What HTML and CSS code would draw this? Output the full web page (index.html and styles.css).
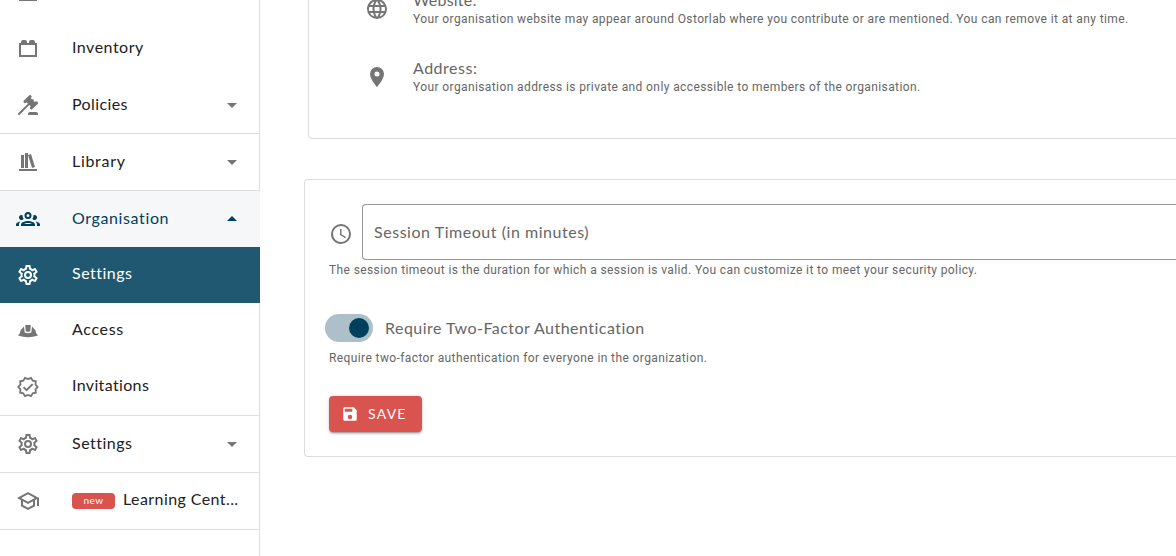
FILE: index.html
```
<!DOCTYPE html>
<html lang="en">
<head>
<meta charset="utf-8">
<title>Organisation settings</title>
<link rel="stylesheet" href="styles.css">
</head>
<body>
<svg class="defs" width="0" height="0">
  <symbol id="cog" viewBox="0 0 24 24"><path d="M12,8A4,4 0 0,1 16,12A4,4 0 0,1 12,16A4,4 0 0,1 8,12A4,4 0 0,1 12,8M12,10A2,2 0 0,0 10,12A2,2 0 0,0 12,14A2,2 0 0,0 14,12A2,2 0 0,0 12,10M10,22C9.75,22 9.54,21.82 9.5,21.58L9.13,18.93C8.5,18.68 7.96,18.34 7.44,17.94L4.95,18.95C4.73,19.03 4.46,18.95 4.34,18.73L2.34,15.27C2.21,15.05 2.27,14.78 2.46,14.63L4.57,12.97L4.5,12L4.57,11L2.46,9.37C2.27,9.22 2.21,8.95 2.34,8.73L4.34,5.27C4.46,5.05 4.73,4.96 4.95,5.05L7.44,6.05C7.96,5.66 8.5,5.32 9.13,5.07L9.5,2.42C9.54,2.18 9.75,2 10,2H14C14.25,2 14.46,2.18 14.5,2.42L14.87,5.07C15.5,5.32 16.04,5.66 16.56,6.05L19.05,5.05C19.27,4.96 19.54,5.05 19.66,5.27L21.66,8.73C21.79,8.95 21.73,9.22 21.54,9.37L19.43,11L19.5,12L19.43,13L21.54,14.63C21.73,14.78 21.79,15.05 21.66,15.27L19.66,18.73C19.54,18.95 19.27,19.04 19.05,18.95L16.56,17.95C16.04,18.34 15.5,18.68 14.87,18.93L14.5,21.58C14.46,21.82 14.25,22 14,22H10M11.25,4L10.88,6.61C9.68,6.86 8.62,7.5 7.85,8.39L5.44,7.35L4.69,8.65L6.8,10.2C6.4,11.37 6.4,12.64 6.8,13.8L4.68,15.36L5.43,16.66L7.86,15.62C8.63,16.5 9.68,17.14 10.87,17.38L11.24,20H12.76L13.13,17.39C14.32,17.14 15.37,16.5 16.14,15.62L18.57,16.66L19.32,15.36L17.2,13.81C17.6,12.64 17.6,11.37 17.2,10.2L19.31,8.65L18.56,7.35L16.15,8.39C15.38,7.5 14.32,6.86 13.12,6.62L12.75,4H11.25Z"/></symbol>
  <symbol id="caret" viewBox="0 0 24 24"><path d="M7,10L12,15L17,10H7Z"/></symbol>
</svg>
<div class="app">
  <nav class="sidebar">
    <div class="item"><svg class="icon" viewBox="0 0 24 24"><path d="M3 5H21V20H3Z"/></svg></div>
    <div class="item"><svg class="icon" viewBox="0 0 24 24"><path d="M19 6V5A2 2 0 0 0 17 3H15A2 2 0 0 0 13 5V6H11V5A2 2 0 0 0 9 3H7A2 2 0 0 0 5 5V6H3V20H21V6M19 18H5V8H19Z"/></svg><span class="label inventory">Inventory</span></div>
    <div class="item group ruled"><svg class="icon" viewBox="0 0 24 24"><path d="M2.3,20.28L11.9,10.68L10.5,9.26L9.78,9.97C9.39,10.36 8.76,10.36 8.37,9.97L7.66,9.26C7.27,8.87 7.27,8.24 7.66,7.85L13.32,2.19C13.71,1.8 14.34,1.8 14.73,2.19L15.44,2.9C15.83,3.29 15.83,3.92 15.44,4.31L14.73,5L16.15,6.43C16.54,6.04 17.17,6.04 17.56,6.43C17.95,6.82 17.95,7.46 17.56,7.85L18.97,9.26L19.68,8.55C20.07,8.16 20.71,8.16 21.1,8.55L21.8,9.26C22.19,9.65 22.19,10.29 21.8,10.68L16.15,16.33C15.76,16.72 15.12,16.72 14.73,16.33L14.03,15.63C13.63,15.24 13.63,14.6 14.03,14.21L14.73,13.5L13.32,12.09L3.71,21.7C3.32,22.09 2.69,22.09 2.3,21.7C1.91,21.31 1.91,20.67 2.3,20.28M20,19A2,2 0 0,1 22,21V22H12V21A2,2 0 0,1 14,19H20Z"/></svg><span class="label policies">Policies</span><svg class="icon caret"><use href="#caret"/></svg></div>
    <div class="item group ruled"><svg class="icon" viewBox="0 0 24 24"><path d="M9 3V18H12V3H9M12 5L16 18L19 17L15 4L12 5M5 5V18H8V5H5M3 19V21H21V19H3Z"/></svg><span class="label library">Library</span><svg class="icon caret"><use href="#caret"/></svg></div>
    <div class="item group open"><svg class="icon" viewBox="0 0 24 24"><path d="M12,5A3.5,3.5 0 0,0 8.5,8.5A3.5,3.5 0 0,0 12,12A3.5,3.5 0 0,0 15.5,8.5A3.5,3.5 0 0,0 12,5M12,7A1.5,1.5 0 0,1 13.5,8.5A1.5,1.5 0 0,1 12,10A1.5,1.5 0 0,1 10.5,8.5A1.5,1.5 0 0,1 12,7M5.5,8A2.5,2.5 0 0,0 3,10.5C3,11.44 3.53,12.25 4.29,12.68C4.65,12.88 5.06,13 5.5,13C5.94,13 6.35,12.88 6.71,12.68C7.08,12.47 7.39,12.17 7.62,11.81C6.89,10.86 6.5,9.7 6.5,8.5C6.5,8.41 6.5,8.31 6.5,8.22C6.2,8.08 5.86,8 5.5,8M18.5,8C18.14,8 17.8,8.08 17.5,8.22C17.5,8.31 17.5,8.41 17.5,8.5C17.5,9.7 17.11,10.86 16.38,11.81C16.5,12 16.63,12.15 16.78,12.3C16.94,12.45 17.1,12.58 17.29,12.68C17.65,12.88 18.06,13 18.5,13C18.94,13 19.35,12.88 19.71,12.68C20.47,12.25 21,11.44 21,10.5A2.5,2.5 0 0,0 18.5,8M12,14C9.66,14 5,15.17 5,17.5V19H19V17.5C19,15.17 14.34,14 12,14M4.71,14.55C2.78,14.78 0,15.76 0,17.5V19H3V17.07C3,16.06 3.69,15.22 4.71,14.55M19.29,14.55C20.31,15.22 21,16.06 21,17.07V19H24V17.5C24,15.76 21.22,14.78 19.29,14.55M12,16C13.53,16 15.24,16.5 16.23,17H7.77C8.76,16.5 10.47,16 12,16Z"/></svg><span class="label organisation">Organisation</span><svg class="icon caret up"><use href="#caret"/></svg></div>
    <div class="item active"><svg class="icon"><use href="#cog"/></svg><span class="label settings">Settings</span></div>
    <div class="item"><svg class="icon" viewBox="0 0 24 24"><path d="M9.200 6H14.800L14.200 12.200Q12 13.200 9.800 12.200ZM8 7.500L8.700 13.500Q12 15 15.300 13.500L16 7.500Q19.500 10 20.300 14.500L22 16.500Q17 18.300 12 18.300T2 16.500L3.700 14.500Q4.500 10 8 7.500Z"/></svg><span class="label access">Access</span></div>
    <div class="item ruled"><svg class="icon" viewBox="0 0 24 24"><path class="line" d="M12 4.100L15 2.800L16.700 5.600L19.800 6.300L19.500 9.600L21.700 12L19.500 14.400L19.800 17.700L16.700 18.400L15 21.200L12 19.900L9 21.200L7.300 18.400L4.200 17.700L4.500 14.400L2.300 12L4.500 9.600L4.200 6.300L7.300 5.600L9 2.800ZM7.500 12.200L10.500 15.200L16.700 9"/></svg><span class="label invitations">Invitations</span></div>
    <div class="item group ruled"><svg class="icon"><use href="#cog"/></svg><span class="label settings">Settings</span><svg class="icon caret"><use href="#caret"/></svg></div>
    <div class="item ruled"><svg class="icon" viewBox="0 0 24 24"><path d="M12 3L1 9L5 11.180V17.180L12 21L19 17.180V11.180L21 10.090V17H23V9L12 3M18.820 9L12 12.720L5.180 9L12 5.280L18.820 9M17 16L12 18.720L7 16V12.270L12 15L17 12.270V16Z"/></svg><span class="badge">new</span><span class="label learning">Learning Cent...</span></div>
  </nav>
  <main class="content">
    <section class="card profile">
      <div class="row"><svg class="icon" viewBox="0 0 24 24"><path d="M16.360,14C16.440,13.340 16.500,12.680 16.500,12C16.500,11.320 16.440,10.660 16.360,10H19.740C19.900,10.640 20,11.310 20,12C20,12.690 19.900,13.360 19.740,14M14.590,19.560C15.190,18.450 15.650,17.250 15.970,16H18.920C17.960,17.650 16.430,18.930 14.590,19.560M14.340,14H9.660C9.560,13.340 9.500,12.680 9.500,12C9.500,11.320 9.560,10.650 9.660,10H14.340C14.430,10.650 14.500,11.320 14.500,12C14.500,12.680 14.430,13.340 14.340,14M12,19.960C11.170,18.760 10.500,17.430 10.090,16H13.910C13.500,17.430 12.830,18.760 12,19.960M8,8H5.080C6.030,6.340 7.570,5.060 9.400,4.440C8.800,5.550 8.350,6.750 8,8M5.080,16H8C8.350,17.250 8.800,18.450 9.400,19.560C7.570,18.930 6.030,17.650 5.080,16M4.260,14C4.100,13.360 4,12.690 4,12C4,11.310 4.100,10.640 4.260,10H7.640C7.560,10.660 7.500,11.320 7.500,12C7.500,12.680 7.560,13.340 7.640,14M12,4.030C12.830,5.230 13.500,6.570 13.910,8H10.090C10.500,6.570 11.170,5.230 12,4.030M18.920,8H15.970C15.650,6.750 15.190,5.550 14.590,4.440C16.430,5.070 17.960,6.340 18.920,8M12,2C6.470,2 2,6.500 2,12A10,10 0 0,0 12,22A10,10 0 0,0 22,12A10,10 0 0,0 12,2Z"/></svg><div><div class="title website">Website:</div><div class="hint">Your organisation website may appear around Ostorlab where you contribute or are mentioned. You can remove it at any time.</div></div></div>
      <div class="row"><svg class="icon" viewBox="0 0 24 24"><path d="M12,11.500A2.500,2.500 0 0,1 9.500,9A2.500,2.500 0 0,1 12,6.500A2.500,2.500 0 0,1 14.500,9A2.500,2.500 0 0,1 12,11.500M12,2A7,7 0 0,0 5,9C5,14.250 12,22 12,22C12,22 19,14.250 19,9A7,7 0 0,0 12,2Z"/></svg><div><div class="title address">Address:</div><div class="hint">Your organisation address is private and only accessible to members of the organisation.</div></div></div>
    </section>
    <section class="card security">
      <div class="timeout"><svg class="icon" viewBox="0 0 24 24"><path d="M12,20A8,8 0 0,0 20,12A8,8 0 0,0 12,4A8,8 0 0,0 4,12A8,8 0 0,0 12,20M12,2A10,10 0 0,1 22,12A10,10 0 0,1 12,22C6.470,22 2,17.500 2,12A10,10 0 0,1 12,2M12.500,7V12.250L17,14.920L16.250,16.150L11,13V7H12.500Z"/></svg><div class="field"><span class="session">Session Timeout (in minutes)</span></div></div>
      <div class="hint">The session timeout is the duration for which a session is valid. You can customize it to meet your security policy.</div>
      <div class="toggle"><span class="switch"><span class="knob"></span></span><span class="twofactor">Require Two-Factor Authentication</span></div>
      <div class="hint">Require two-factor authentication for everyone in the organization.</div>
      <button class="save"><svg viewBox="0 0 24 24"><path d="M15,9H5V5H15M12,19A3,3 0 0,1 9,16A3,3 0 0,1 12,13A3,3 0 0,1 15,16A3,3 0 0,1 12,19M17,3H5C3.890,3 3,3.900 3,5V19A2,2 0 0,0 5,21H19A2,2 0 0,0 21,19V7L17,3Z"/></svg><span>SAVE</span></button>
    </section>
  </main>
</div>
</body>
</html>
```
FILE: styles.css
```
* { box-sizing: border-box; }
body { margin: 0; font-family: Lato, "Open Sans", sans-serif; font-size: 16px; font-variant-ligatures: none; color: #666; background: #fff; overflow: hidden; }
.defs { display: none; }
.app { display: flex; width: 1176px; height: 556px; overflow: hidden; }
.icon { width: 24px; height: 24px; flex: none; fill: #757575; }
.line { fill: none; stroke: #757575; stroke-width: 1.8; }

.sidebar { width: 260px; flex: none; margin-top: -35px; height: 591px; border-right: 1px solid #dcdcdc; }
.item { height: 56px; display: flex; align-items: center; padding-left: 16px; margin-right: -1px; color: #212121; }
.item.ruled { height: 57px; border-bottom: 1px solid #dcdcdc; }
.label { margin-left: 32px; line-height: 24px; padding-bottom: 5px; white-space: nowrap; }
.group .label { padding-bottom: 3px; }
.caret { margin-left: auto; margin-right: 16px; }
.up { transform: rotate(180deg); }
.open { background: #f6f7f9; color: #00405d; }
.open .icon { fill: #00405d; }
.active { background: #1f5870; color: #fff; }
.active .icon { fill: #fff; }
.badge { margin-left: 32px; width: 43px; height: 16px; border-radius: 4px; background: #d9534f; color: #fff; font-size: 10px; line-height: 15px; letter-spacing: .4px; text-align: center; }
.badge + .label { margin-left: 8px; }

.inventory { letter-spacing: .5px; }
.policies { letter-spacing: .4px; }
.library { letter-spacing: .7px; }
.organisation { letter-spacing: .62px; }
.settings { letter-spacing: .5px; }
.access { letter-spacing: .65px; }
.invitations { letter-spacing: .35px; }
.learning { letter-spacing: .42px; }
.website { letter-spacing: .2px; }
.address { letter-spacing: .5px; }
.session { letter-spacing: .54px; }
.twofactor { letter-spacing: .47px; padding-bottom: 2px; }

.content { flex: 1; min-width: 0; }
.card { border: 1px solid #dcdcdc; border-right: 0; }
.profile { margin: -69px 0 0 48px; height: 208px; border-radius: 4px 0 0 4px; padding: 43px 0 0 56px; }
.row { display: flex; align-items: center; gap: 24px; height: 68px; }
.title { line-height: 18px; padding-bottom: 2px; }
.hint { font-family: Roboto, sans-serif; font-size: 12px; line-height: 16px; letter-spacing: .395px; white-space: nowrap; }
.security { margin: 40px 0 0 44px; height: 278px; border-radius: 4px 0 0 4px; padding: 24px 0 0 24px; }
.timeout { display: flex; align-items: center; gap: 9px; }
.timeout .icon { margin-top: 4px; }
.field { flex: 1; height: 56px; border: 1px solid #949494; border-right: 0; border-radius: 4px 0 0 4px; padding-left: 11px; line-height: 54px; }
.security > .hint { margin-top: 2px; }
.toggle { display: flex; align-items: center; gap: 12px; margin: 36px 0 0 -4px; height: 28px; }
.switch { display: flex; align-items: center; justify-content: flex-end; width: 48px; height: 28px; padding: 4px; border-radius: 14px; background: #adc0c9; }
.knob { width: 20px; height: 20px; border-radius: 50%; background: #00405d; }
.toggle + .hint { margin-top: 8px; }
.save { display: flex; align-items: center; gap: 9px; width: 93px; height: 36px; margin-top: 30px; padding: 0 0 0 12px; border: 0; border-radius: 4px; background: #d9534f; color: #fff; font: 14px Lato, sans-serif; letter-spacing: 1.25px; box-shadow: 0 3px 1px -2px rgba(0,0,0,.2), 0 2px 2px rgba(0,0,0,.14), 0 1px 5px rgba(0,0,0,.12); }
.save span { padding-bottom: 2px; }
.save svg { width: 18px; height: 18px; fill: #fff; }
```
